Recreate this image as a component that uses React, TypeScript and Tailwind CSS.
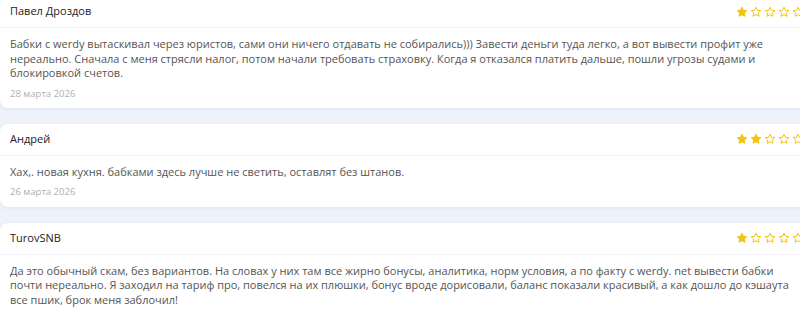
const reviews = [
    {
        name: "Павел Дроздов",
        rating: 1,
        text: "Бабки с werdy вытаскивал через юристов, сами они ничего отдавать не собирались))) Завести деньги туда легко, а вот вывести профит уже нереально. Сначала с меня стрясли налог, потом начали требовать страховку. Когда я отказался платить дальше, пошли угрозы судами и блокировкой счетов.",
        date: "28 марта 2026",
        first: true,
    },
    {
        name: "Андрей",
        rating: 2,
        text: "Хах,. новая кухня. бабками здесь лучше не светить, оставлят без штанов.",
        date: "26 марта 2026",
    },
    {
        name: "TurovSNB",
        rating: 1,
        text: "Да это обычный скам, без вариантов. На словах у них там все жирно бонусы, аналитика, норм условия, а по факту с werdy. net вывести бабки почти нереально. Я заходил на тариф про, повелся на их плюшки, бонус вроде дорисовали, баланс показали красивый, а как дошло до кэшаута все пшик, брок меня заблочил!",
        date: "25 марта 2026",
    },
];

const Star = ({ filled }: { filled: boolean }) => (
    <svg width="12" height="12" viewBox="0 0 24 24">
        <path
            d="M12 2.5l2.9 6.1 6.6.8-4.9 4.6 1.3 6.6L12 17.3l-5.9 3.3 1.3-6.6-4.9-4.6 6.6-.8z"
            fill={filled ? "#f2c30f" : "#fff"}
            stroke="#f2c30f"
            strokeWidth="2"
            strokeLinejoin="round"
        />
    </svg>
);

const ReviewCard = ({ r }: { r: (typeof reviews)[number] }) => {
    return (
        <div className={`bg-white rounded-[8px] shadow-[0_1px_4px_rgba(40,60,110,0.08)] ${r.first ? "-mt-[4px]" : ""}`}>
            <div className="flex items-center justify-between h-[32px] px-[10px] border-b border-[#f1f3f8]">
                <span className="text-[11px] text-[#222]">{r.name}</span>
                <div className="flex gap-[2px]">
                    {[0, 1, 2, 3, 4].map((i) => (
                        <Star key={i} filled={i < r.rating} />
                    ))}
                </div>
            </div>
            <div className="px-[10px] pt-[9px] pb-[7px]">
                <p className="text-[11px] leading-[14.5px] text-[#555] pr-[15px]">{r.text}</p>
                <p className="text-[9.5px] text-[#b0b0b0] mt-[6px]">{r.date}</p>
            </div>
        </div>
    );
};

export default function App() {
    return (
        <div className="w-[800px] h-[312px] overflow-hidden bg-[#eef2fb]" style={{ fontFamily: "'Open Sans', 'DejaVu Sans', sans-serif" }}>
            <div className="w-[814px] flex flex-col gap-[16px]">
                {reviews.map((r) => (
                    <ReviewCard key={r.name} r={r} />
                ))}
            </div>
        </div>
    );
}
